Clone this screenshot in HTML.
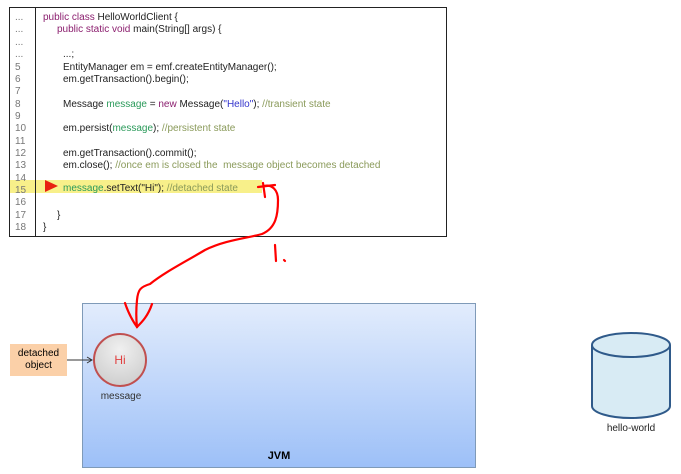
<!DOCTYPE html>
<html><head><style>
body{margin:0;width:681px;height:474px;background:#fff;position:relative;overflow:hidden;font-family:"Liberation Sans",sans-serif}
.code{position:absolute;left:9px;top:7px;width:438px;height:230px;border:1px solid #222;box-sizing:border-box}
.div{position:absolute;left:35px;top:7px;width:1px;height:230px;background:#222}
.ln{position:absolute;left:15px;font-size:10px;color:#777;line-height:12px;margin-top:2px}
.tx{position:absolute;font-size:10px;color:#222;line-height:12px;white-space:pre;margin-top:2px}
.k{color:#8b1e6e}.g{color:#2a9a5a}.c{color:#8a9a5a}.s{color:#3333cc}
.hl{position:absolute;left:10px;top:180px;width:252px;height:13px;background:#f8f08a}
.jvm{position:absolute;left:82px;top:303px;width:394px;height:165px;border:1px solid #7f9ab8;box-sizing:border-box;background:linear-gradient(#e2ecfc,#9dc0f8)}
</style></head><body>
<div class="code"></div><div class="hl"></div><div class="div"></div>
<div class="ln" style="top:10px">...</div><div class="ln" style="top:22px">...</div><div class="ln" style="top:35px">...</div><div class="ln" style="top:47px">...</div>
<div class="ln" style="top:60px">5</div><div class="ln" style="top:72px">6</div><div class="ln" style="top:84px">7</div><div class="ln" style="top:97px">8</div><div class="ln" style="top:109px">9</div><div class="ln" style="top:121px">10</div><div class="ln" style="top:134px">11</div><div class="ln" style="top:146px">12</div><div class="ln" style="top:158px">13</div><div class="ln" style="top:171px">14</div><div class="ln" style="top:183px">15</div><div class="ln" style="top:195px">16</div><div class="ln" style="top:208px">17</div><div class="ln" style="top:220px">18</div>
<div class="tx" style="left:43px;top:10px"><span class="k">public class</span> HelloWorldClient {</div>
<div class="tx" style="left:57px;top:22px"><span class="k">public static void</span> main(String[] args) {</div>
<div class="tx" style="left:63px;top:47px">...;</div>
<div class="tx" style="left:63px;top:60px">EntityManager em = emf.createEntityManager();</div>
<div class="tx" style="left:63px;top:72px">em.getTransaction().begin();</div>
<div class="tx" style="left:63px;top:97px">Message <span class="g">message</span> = <span class="k">new</span> Message(<span class="s">"Hello"</span>); <span class="c">//transient state</span></div>
<div class="tx" style="left:63px;top:121px">em.persist(<span class="g">message</span>); <span class="c">//persistent state</span></div>
<div class="tx" style="left:63px;top:146px">em.getTransaction().commit();</div>
<div class="tx" style="left:63px;top:158px">em.close(); <span class="c">//once em is closed the  message object becomes detached</span></div>
<div class="tx" style="left:63px;top:181px"><span class="g">message</span>.setText("Hi"); <span class="c">//detached state</span></div>
<div class="tx" style="left:57px;top:208px">}</div>
<div class="tx" style="left:43px;top:220px">}</div>
<div class="jvm"></div>
<div style="position:absolute;left:82px;top:450px;width:394px;text-align:center;font-size:11px;font-weight:bold">JVM</div>
<div style="position:absolute;left:10px;top:344px;width:57px;height:32px;background:#fbd0a8;font-size:10px;text-align:center;line-height:12px;padding-top:4px;box-sizing:border-box">detached<br>object</div>
<div style="position:absolute;left:93px;top:333px;width:54px;height:54px;border-radius:50%;border:2px solid #c05050;box-sizing:border-box;background:radial-gradient(circle at 50% 30%,#f0f0f0,#c8c8c8);color:#e04040;font-size:12px;text-align:center;line-height:50px">Hi</div>
<div style="position:absolute;left:90px;top:391px;width:62px;text-align:center;font-size:10px;color:#333">message</div>
<div style="position:absolute;left:580px;top:423px;width:102px;text-align:center;font-size:10px;color:#222">hello-world</div>
<svg width="681" height="474" style="position:absolute;left:0;top:0">
<path d="M45 180 L58 186 L45 192Z" fill="#e82010"/>
<path d="M67 360 L92 360 M87 357 L92 360 L87 363" stroke="#333" fill="none" stroke-width="1"/>
<path d="M592 345 L592 406 A39 12 0 0 0 670 406 L670 345" fill="#d8ebf4" stroke="#2f5a8a" stroke-width="2"/>
<ellipse cx="631" cy="345" rx="39" ry="12" fill="#d8ebf4" stroke="#2f5a8a" stroke-width="2"/>
<g stroke="#f00" stroke-width="2.2" fill="none" stroke-linecap="round">
<path d="M264 186 C272 184 278 190 278 200 C278 215 276 228 262 234 C248 238 225 240 205 250 C185 262 165 272 150 284 C140 287 138 290 137 300 C136 310 136 318 137 327"/>
<path d="M125 303 C128 312 132 320 137 327 C142 322 148 316 152 304"/>
<path d="M263 183 L265 197 M258 187 L275 185"/>
<path d="M275 245 L276 261"/>
<path d="M284 260 L285 261"/>
</g>
</svg>
</body></html>
